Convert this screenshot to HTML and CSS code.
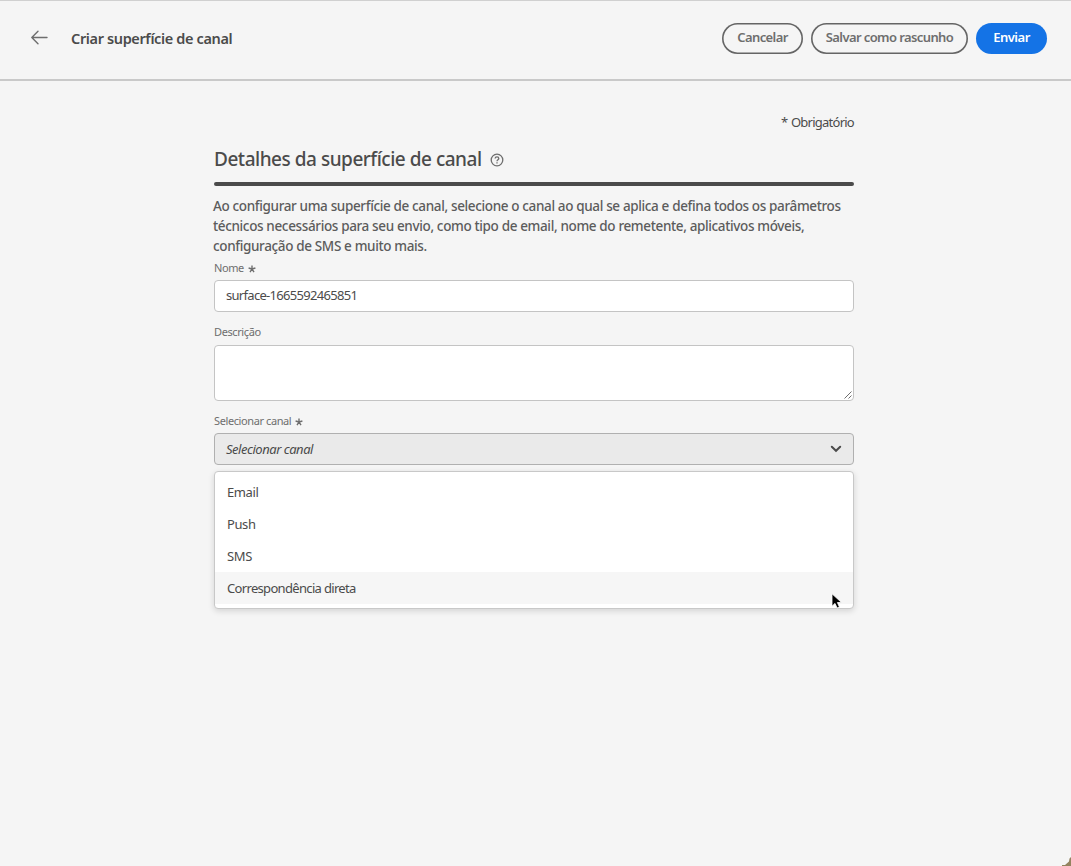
FILE: index.html
```html
<!DOCTYPE html>
<html lang="pt-BR">
<head>
<meta charset="utf-8">
<title>Criar superfície de canal</title>
<link rel="stylesheet" href="styles.css">
</head>
<body>
<header class="topbar">
  <svg class="back" viewBox="0 0 18 16" width="18" height="16"><path d="M17 7.5H1.8M8 1.2L1.8 7.5 8 13.8"/></svg>
  <h1 class="page-title">Criar superfície de canal</h1>
  <div class="actions">
    <button class="btn cancel">Cancelar</button>
    <button class="btn draft">Salvar como rascunho</button>
    <button class="btn primary">Enviar</button>
  </div>
</header>
<main class="form">
  <p class="required">* Obrigatório</p>
  <div class="section-head">
    <h2 class="section-title">Detalhes da superfície de canal</h2>
    <svg class="help" viewBox="0 0 14 14" width="14" height="14"><circle cx="7" cy="7" r="5.8"/><path d="M5.1 5.5c.1-2.2 3.7-2.2 3.7 0 0 1.3-1.8 1.3-1.8 2.8M7 9.3v1.3"/></svg>
  </div>
  <div class="rule"></div>
  <p class="intro">Ao configurar uma superfície de canal, selecione o canal ao qual se aplica e defina todos os parâmetros<br>técnicos necessários para seu envio, como tipo de email, nome do remetente, aplicativos móveis,<br>configuração de SMS e muito mais.</p>
  <div class="label name-label"><span>Nome</span><svg class="star" viewBox="0 0 8 8" width="8" height="8"><path d="M4 4V.5M4 4L.6 3M4 4l3.4-1M4 4L2 7.2M4 4l2 3.2"/></svg></div>
  <div class="field"><span>surface-1665592465851</span></div>
  <div class="label desc-label"><span>Descrição</span></div>
  <div class="area"><svg viewBox="0 0 8 8" width="8" height="8"><path d="M.5 7.5l7-7M4.5 7.5l3-3"/></svg></div>
  <div class="label channel-label"><span>Selecionar canal</span><svg class="star" viewBox="0 0 8 8" width="8" height="8"><path d="M4 4V.5M4 4L.6 3M4 4l3.4-1M4 4L2 7.2M4 4l2 3.2"/></svg></div>
  <div class="picker"><span>Selecionar canal</span><svg viewBox="0 0 12 8" width="12" height="8"><path d="M1.8 1.8L6 5.8l4.2-4"/></svg></div>
  <ul class="menu">
    <li>Email</li>
    <li>Push</li>
    <li>SMS</li>
    <li class="active">Correspondência direta</li>
  </ul>
</main>
<svg class="cursor" viewBox="0 0 12 16" width="12" height="16"><path d="M1 .8v12.4l3-2.8 2.1 4.6 2.3-1-2-4.5h4.1z"/></svg>
<svg class="corner" viewBox="0 0 9 9" width="9" height="9"><path d="M9 0v9H0V8h3L7 4.5l.5-3z"/></svg>
</body>
</html>
```
FILE: styles.css
```css
* { box-sizing: border-box; }
body { margin: 0; height: 866px; overflow: hidden; position: relative; background: #f5f5f5; color: #4b4b4b; font: 13px/20px "Noto Sans", "Open Sans", sans-serif; }
h1, h2, p, ul { margin: 0; padding: 0; }
svg { display: block; fill: none; stroke: #6e6e6e; flex: none; }
.topbar { height: 81px; border-top: 1px solid #d0d0d0; border-bottom: 2px solid #c9c9c9; display: flex; align-items: flex-start; padding: 22px 24px 0 30px; }
.back { margin-top: 7px; stroke-width: 1.4; stroke-linecap: round; stroke-linejoin: round; }
.page-title { margin: 5px 0 0 23px; font-size: 14.5px; line-height: 20px; font-weight: 600; letter-spacing: -.37px; white-space: nowrap; }
.actions { display: flex; margin-left: auto; gap: 8px; }
.btn { height: 31px; padding: 0 0 3px; border: 0; border-radius: 16px; background: transparent; box-shadow: inset 0 0 0 1.6px #656565; color: #6e6e6e; font: 600 13px/20px "Noto Sans", sans-serif; letter-spacing: -.6px; white-space: nowrap; }
.cancel { width: 81px; }
.draft { width: 157px; }
.primary { width: 71px; background: #1473e6; box-shadow: none; color: #fff; letter-spacing: -.5px; }
.form { width: 640px; margin-left: 214px; padding-top: 31px; }
.required { text-align: right; letter-spacing: -.75px; word-spacing: 1px; font-size: 13px; }
.section-head { display: flex; align-items: center; gap: 8px; height: 50px; padding-top: 3px; }
.section-title { font-size: 19px; line-height: 26px; font-weight: 500; letter-spacing: -.48px; white-space: nowrap; }
.help { margin-top: 3px; stroke-width: 1.3; }
.rule { height: 4px; border-radius: 2px; background: #4b4b4b; }
.intro { margin: 10px 0 0 -1px; font-size: 13.5px; font-weight: 500; white-space: nowrap; color: #5c5c5c; letter-spacing: -.36px; }
.label { display: flex; align-items: center; font-size: 11px; line-height: 16px; letter-spacing: -.4px; color: #6e6e6e; }
.star { margin: 1px 0 0 4px; stroke-width: 1.4; }
.name-label { margin-top: 4px; }
.field { height: 32px; margin-top: 4px; padding: 4px 11px; border: 1px solid #c4c4c4; border-radius: 4px; background: #fff; letter-spacing: -.7px; }
.desc-label { margin-top: 12px; }
.area { height: 56px; margin-top: 5px; display: flex; justify-content: flex-end; align-items: flex-end; border: 1px solid #c4c4c4; border-radius: 4px; background: #fff; padding: 1px; }
.channel-label { margin-top: 12px; }
.picker { height: 32px; margin-top: 4px; padding: 0 11px; display: flex; align-items: center; justify-content: space-between; border: 1px solid #b0b0b0; border-radius: 4px; background: #eaeaea; font-style: italic; letter-spacing: -.47px; }
.picker svg { stroke: #4b4b4b; stroke-width: 2; stroke-linecap: round; }
.menu { height: 138px; margin-top: 6px; padding: 4px 0; list-style: none; border: 1px solid #c8c8c8; border-radius: 4px; background: #fff; box-shadow: 0 2px 6px rgba(0,0,0,.14); letter-spacing: -.4px; }
.menu li { height: 32px; padding: 6px 12px; }
.menu .active { background: #f6f6f6; letter-spacing: -.67px; }
.cursor { position: absolute; left: 831px; top: 593px; fill: #000; stroke: #fff; stroke-width: .8; }
.corner { position: absolute; right: 0; bottom: 0; fill: #93835f; stroke: none; }
```
